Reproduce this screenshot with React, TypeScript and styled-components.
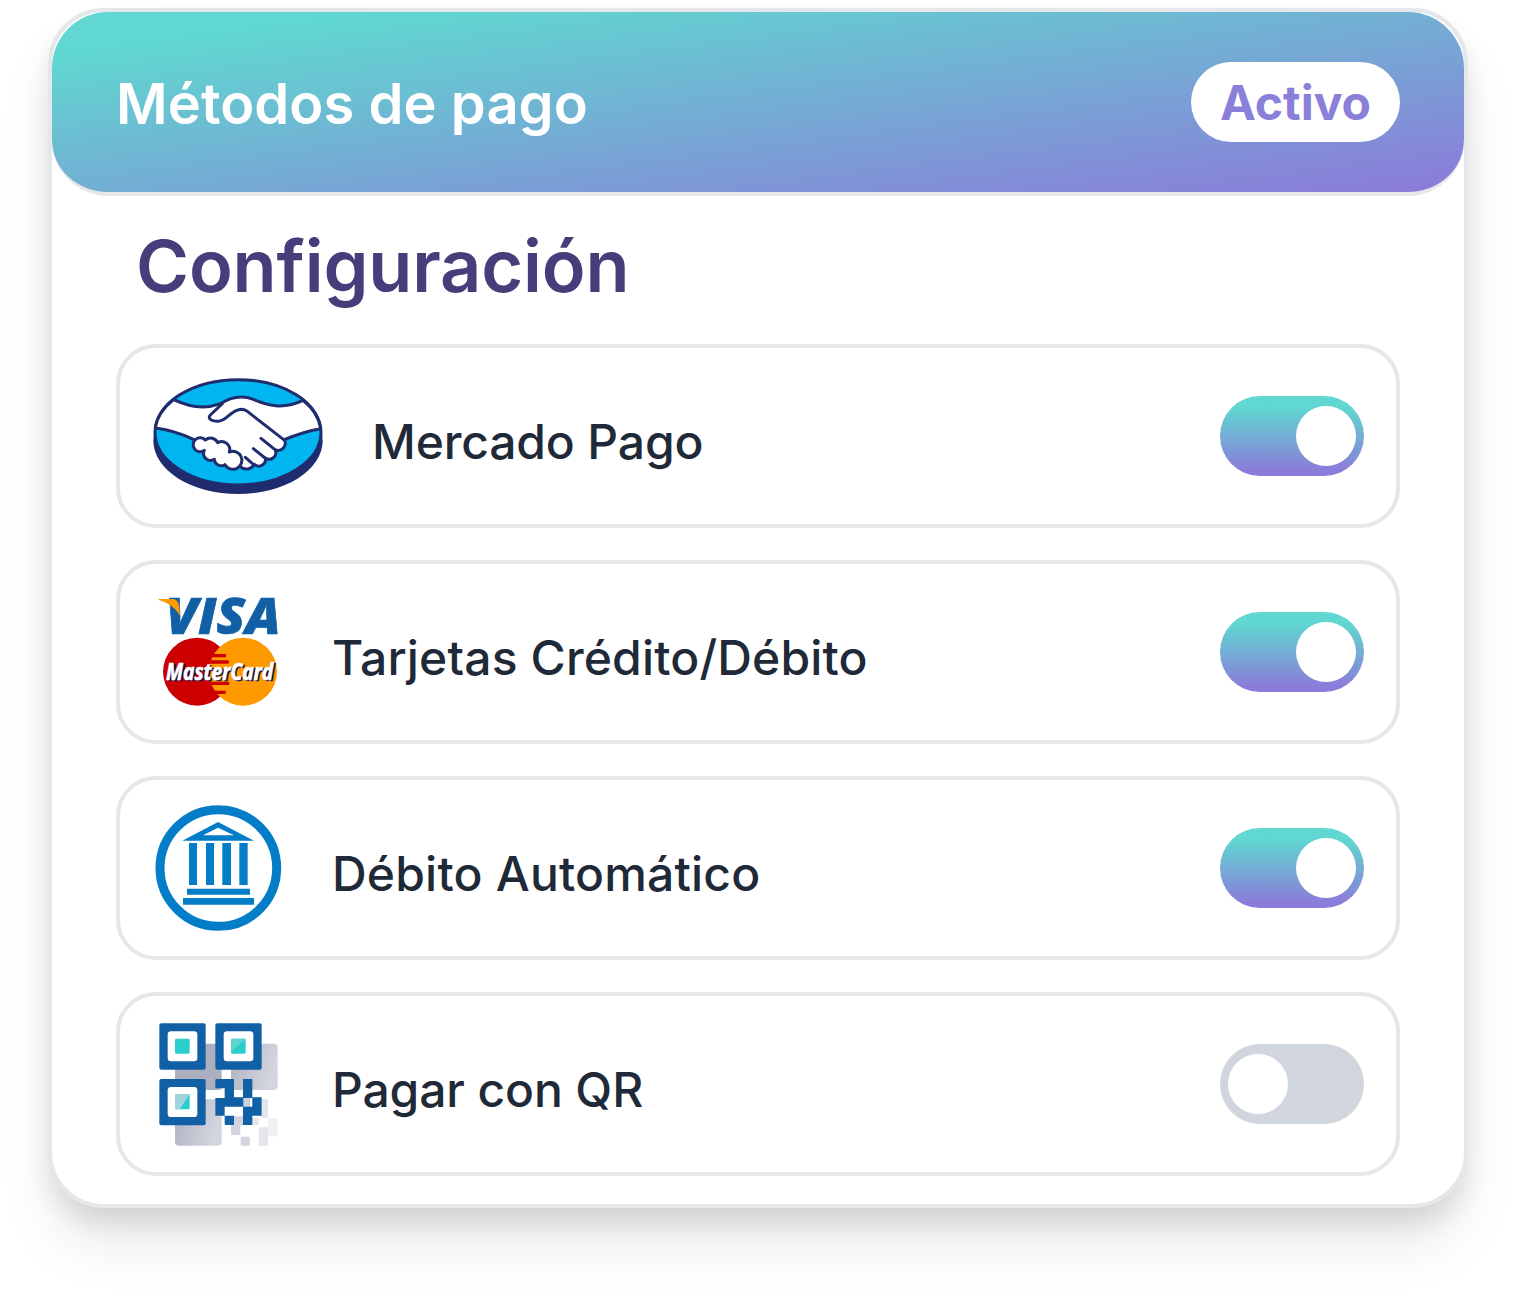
import React, { useState } from 'react';
import styled, { createGlobalStyle } from 'styled-components';

const GlobalStyle = createGlobalStyle`
  * {
    box-sizing: border-box;
  }

  body {
    margin: 0;
    background: #FFFFFF;
    font-family: Inter, sans-serif;
  }
`;

const Page = styled.div`
  height: 1296px;
  padding: 8px 48px 88px;
  overflow: hidden;
`;

const Card = styled.section`
  height: 1200px;
  background: #FFFFFF;
  border: 4px solid #E5E7EB;
  border-radius: 56px;
  box-shadow: 0 40px 60px -8px rgba(0, 0, 0, 0.1), 0 16px 24px -2px rgba(0, 0, 0, 0.1);
`;

const Header = styled.header`
  display: flex;
  align-items: center;
  justify-content: space-between;
  height: 184px;
  padding: 0 64px;
  border-bottom: 4px solid #E5E7EB;
  border-radius: 56px;
  background: linear-gradient(to bottom right, #60D7D0 12%, #8A7DD9 97%);
`;

const Title = styled.h1`
  margin: 4px 0 0;
  color: #FFFFFF;
  font-size: 56px;
  font-weight: 600;
  line-height: 80px;
  letter-spacing: 0.06px;
`;

const Badge = styled.span`
  height: 80px;
  padding: 0 29px;
  border-radius: 40px;
  background: #FFFFFF;
  color: #8A7FD9;
  font-size: 48px;
  font-weight: 700;
  line-height: 82px;
`;

const Content = styled.div`
  padding: 26px 64px 0;
`;

const Heading = styled.h2`
  margin: 0 0 34px;
  padding-left: 20px;
  color: #483D7B;
  font-size: 72px;
  font-weight: 600;
  line-height: 88px;
  letter-spacing: -0.15px;
`;

const MethodList = styled.div`
  display: grid;
  grid-gap: 32px;
`;

const Method = styled.div`
  display: flex;
  align-items: center;
  height: 184px;
  padding: 0 32px;
  border: 4px solid #E5E7EB;
  border-radius: 40px;
`;

const MethodName = styled.span<{ $tracking: number }>`
  flex: 1;
  margin-left: 48px;
  padding-top: 12px;
  color: #1F2937;
  font-size: 48px;
  font-weight: 500;
  line-height: 64px;
  letter-spacing: ${({ $tracking }) => $tracking}px;
`;

const Switch = styled.button<{ $on: boolean }>`
  display: flex;
  align-items: center;
  justify-content: ${({ $on }) => ($on ? 'flex-end' : 'flex-start')};
  width: 144px;
  height: 80px;
  padding: 0 8px;
  border: none;
  border-radius: 40px;
  background: ${({ $on }) => ($on ? 'linear-gradient(#60D7D0 14%, #8A7DD9 92%)' : '#D1D5DD')};
  cursor: pointer;
`;

const Thumb = styled.span`
  width: 60px;
  height: 60px;
  border-radius: 50%;
  background: #FFFFFF;
`;

const Icon = styled.svg<{ $width?: number }>`
  flex: none;
  width: ${({ $width = 132 }) => $width}px;
  overflow: visible;
`;

const MercadoPagoIcon = () => (
  <Icon $width={172} viewBox="21 12 516 372">
    <ellipse cx="279" cy="212" rx="254" ry="160" fill="#1F2D6E" />
    <ellipse cx="279" cy="187" rx="249" ry="158" fill="#00B5F0" stroke="#1F2D6E" strokeWidth="9" />
    <g stroke="#1F2D6E" strokeWidth="9" strokeLinecap="round" strokeLinejoin="round">
      <path
        fill="#FFFFFF"
        d="M86 89 C130 110 182 118 226 101 C255 83 290 74 325 88 C365 106 415 120 474 91
           A249 158 0 0 1 527 176 C490 182 455 193 418 209
           A22 22 0 0 1 391 240 A20 20 0 0 1 361 264 A20 20 0 0 1 328 283 A27 27 0 0 1 286 290
           L145 208 C111 192 75 179 31 174 A249 158 0 0 1 86 89 Z"
      />
      <path
        fill="#FFFFFF"
        d="M240 284 A21 21 0 0 1 208 268 A21 21 0 0 1 178 241 A21 21 0 1 1 181 210
           A24 24 0 0 1 218 218 A24 24 0 0 1 253 246 A27 27 0 1 1 240 284 Z"
      />
      <path
        fill="#FFFFFF"
        d="M232 101 L196 135 C185 148 205 156 224 153 C248 150 258 119 290 118 C297 118 302 121 307 124 L416 209"
      />
      <path fill="none" d="M348 205 L390 239 M325 236 L360 264 M301 262 L325 283" />
    </g>
  </Icon>
);

const CardsIcon = () => (
  <Icon viewBox="21 3 396 396">
    <text
      x="62"
      y="148"
      textLength="345"
      lengthAdjust="spacingAndGlyphs"
      fill="#1160A6"
      stroke="#1160A6"
      strokeWidth="2"
      fontFamily="'Open Sans'"
      fontSize="147"
      fontWeight="800"
      fontStyle="italic"
    >
      VISA
    </text>
    <path d="M40 42 H84 C98 43 102 56 103 68 L105 92 C92 68 68 52 40 44 Z" fill="#FF9900" />
    <circle cx="156" cy="260" r="102" fill="#CC0000" />
    <circle cx="294" cy="260" r="102" fill="#FF9900" />
    <path
      d="M206 207 H243 V217 H201 Z M198 226 H251 V236 H195 Z M196 290 H253 V300 H199 Z M203 317 H242 V327 H211 Z"
      fill="#CC0000"
    />
    <g
      fontFamily="'Open Sans'"
      fontSize="70"
      fontWeight="700"
      fontStyle="italic"
      strokeWidth="2"
    >
      <text x="68" y="289" textLength="322" lengthAdjust="spacingAndGlyphs" fill="#14144D" stroke="#14144D">MasterCard</text>
      <text x="63" y="285" textLength="322" lengthAdjust="spacingAndGlyphs" fill="#FFFFFF" stroke="#FFFFFF">MasterCard</text>
    </g>
  </Icon>
);

const BankIcon = () => (
  <Icon viewBox="21 21 396 396">
    <circle cx="220" cy="219" r="175" fill="none" stroke="#037DC7" strokeWidth="27" />
    <path
      fill="#037DC7"
      fillRule="evenodd"
      d="M219 81 L327 137 H112 Z M219 98 L174 121 H267 Z
         M132 144 H156 V270 H132 Z M183 144 H207 V270 H183 Z M232 144 H258 V270 H232 Z M283 144 H308 V270 H283 Z
         M126 281 H315 V299 H126 Z M114 309 H327 V329 H114 Z"
    />
  </Icon>
);

const QrIcon = () => (
  <Icon viewBox="21 24 396 396">
    <defs>
      <linearGradient id="qrShade" x1="0" y1="0" x2="1" y2="0.3">
        <stop offset="0" stopColor="#AEB1BF" />
        <stop offset="1" stopColor="#D3D6DF" />
      </linearGradient>
    </defs>
    <rect x="90" y="101" width="140" height="139" rx="9" fill="#ABAFBE" />
    <rect x="258" y="101" width="140" height="139" rx="12" fill="url(#qrShade)" />
    <rect x="90" y="268" width="140" height="139" rx="10" fill="url(#qrShade)" />
    <path d="M267 319 H294 V346 H286 V375 H258 V346 H267 Z M287 380 H314 V407 H287 Z" fill="#D1D4DD" />
    <path d="M350 268 H369 V324 H350 Z M322 324 H341 V346 H322 Z M341 352 H369 V407 H341 Z" fill="#E4E6EC" />
    <path d="M369 324 H398 V379 H369 Z" fill="#F0F1F6" />
    {[[43, 40], [211, 40], [43, 207]].map(([x, y]) => (
      <g key={`${x}-${y}`}>
        <rect x={x} y={y} width="139" height="139" rx="6" fill="#1160A6" />
        <rect x={x + 25} y={y + 24} width="89" height="90" rx="10" fill="#FFFFFF" />
        <rect x={x + 47} y={y + 46} width="44" height="45" rx="4" fill="#2BCDCD" />
      </g>
    ))}
    <path d="M262 86 H302 L258 126 V90 Z" fill="#5DD3D0" />
    <path d="M94 253 H134 L104 298 H94 Q90 298 90 294 V257 Q90 253 94 253 Z" fill="#A0D5DE" />
    <path
      d="M213 207 H267 V262 H294 V207 H322 V262 H350 V317 H322 V345 H294 V290 H239 V317 H211 V264 H239 V235 H211 V209 Z
         M239 317 H267 V345 H241 L239 343 Z"
      fill="#1160A6"
    />
    <path d="M295 264 H314 V290 H295 Z" fill="#D1D4DD" />
    <path d="M314 264 H322 V290 H314 Z" fill="#FFFFFF" />
  </Icon>
);

const methods = [
  { name: 'Mercado Pago', icon: <MercadoPagoIcon />, tracking: -0.15, enabled: true },
  { name: 'Tarjetas Crédito/Débito', icon: <CardsIcon />, tracking: 0.16, enabled: true },
  { name: 'Débito Automático', icon: <BankIcon />, tracking: 0.2, enabled: true },
  { name: 'Pagar con QR', icon: <QrIcon />, tracking: -0.12, enabled: false },
];

function App() {
  const [enabled, setEnabled] = useState(methods.map(m => m.enabled));

  const toggle = (index: number) => {
    setEnabled(enabled.map((on, i) => (i === index ? !on : on)));
  };

  return (
    <Page>
      <GlobalStyle />
      <Card>
        <Header>
          <Title>Métodos de pago</Title>
          <Badge>Activo</Badge>
        </Header>
        <Content>
          <Heading>Configuración</Heading>
          <MethodList>
            {methods.map((method, i) => (
              <Method key={method.name}>
                {method.icon}
                <MethodName $tracking={method.tracking}>{method.name}</MethodName>
                <Switch $on={enabled[i]} onClick={() => toggle(i)}>
                  <Thumb />
                </Switch>
              </Method>
            ))}
          </MethodList>
        </Content>
      </Card>
    </Page>
  );
}

export default App;
